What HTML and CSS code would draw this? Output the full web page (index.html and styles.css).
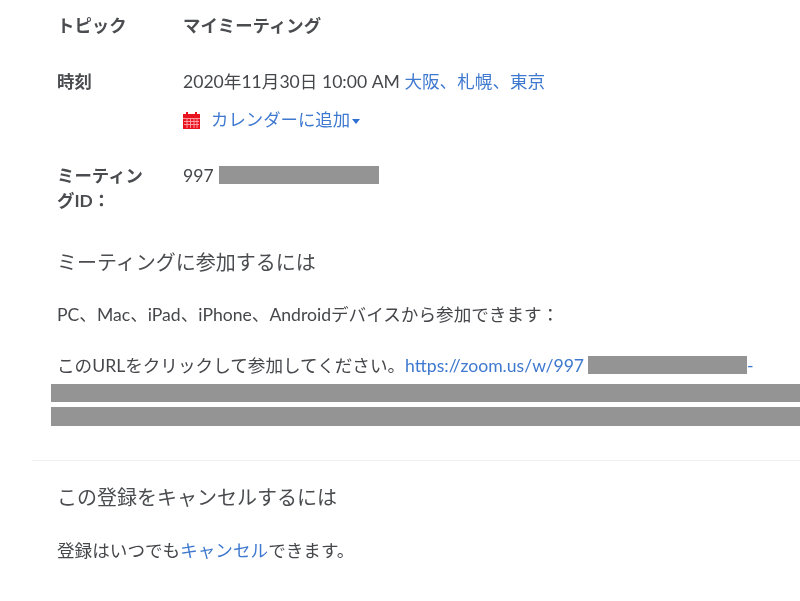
FILE: index.html
```html
<!DOCTYPE html>
<html lang="ja">
<head>
<meta charset="utf-8">
<title>ミーティング登録</title>
<link rel="stylesheet" href="styles.css">
</head>
<body>
<main class="page">
  <div class="info">
    <div class="row row-topic">
      <div class="label">トピック</div>
      <div class="value strong">マイミーティング</div>
    </div>
    <div class="row row-time">
      <div class="label">時刻</div>
      <div class="value">
        <div>2020年11月30日 10:00 AM <a class="link">大阪、札幌、東京</a></div>
        <div class="calendar">
          <svg class="cal-icon" viewBox="0 0 17 18" aria-hidden="true">
            <path fill="#e8131f" d="M0 3h3V1h2v2h7V1h2v2h3v15H0z"/>
            <path stroke="#ff9aa2" stroke-width="1" fill="none" d="M0 7.5h17M1 10.5h15M1 13.5h15M4 7v10M7.5 7v10M11 7v10M14 7v10"/>
          </svg>
          <a class="link">カレンダーに追加</a><span class="caret"></span>
        </div>
      </div>
    </div>
    <div class="row row-id">
      <div class="label">ミーティングID：</div>
      <div class="value">997 <span class="redact redact-id"></span></div>
    </div>
  </div>

  <h2 class="heading">ミーティングに参加するには</h2>
  <p class="text devices">PC、Mac、iPad、iPhone、Androidデバイスから参加できます：</p>
  <p class="text url">このURLをクリックして参加してください。<a class="link">https://zoom.us/w/997</a><span class="redact redact-url"></span><a class="link">-</a></p>
  <div class="redact-line first"></div>
  <div class="redact-line"></div>

  <hr class="divider">

  <h2 class="heading cancel-heading">この登録をキャンセルするには</h2>
  <p class="text cancel">登録はいつでも<a class="link">キャンセル</a>できます。</p>
</main>
</body>
</html>
```

FILE: styles.css
```css
html, body {
  margin: 0;
  padding: 0;
  background: #fff;
}
body {
  width: 800px;
  height: 601px;
  overflow: hidden;
  font-family: "Lato", "Noto Sans CJK JP", sans-serif;
  font-size: 17.6px;
  line-height: 27px;
  color: #45474b;
}
.page {
  filter: blur(0.5px);
  padding-top: 12px;
}
.info {
  padding-left: 57px;
}
.row {
  display: flex;
}
.label {
  width: 90px;
  margin-right: 36px;
  font-size: 17.4px;
  font-weight: 700;
  color: #4a4c50;
  flex: none;
}
.strong {
  font-size: 17.4px;
  font-weight: 700;
  color: #4a4c50;
}
.row-topic {
  margin-bottom: 29px;
}
.row-time {
  margin-bottom: 30px;
}
.row-id {
  line-height: 25px;
}
.calendar {
  display: flex;
  align-items: center;
  margin-top: 11px;
  font-size: 17.4px;
}
.cal-icon {
  width: 17px;
  height: 18px;
  margin-right: 11px;
}
.link {
  color: #3f79cf;
}
.caret {
  width: 0;
  height: 0;
  margin-left: 2px;
  margin-top: 3px;
  border-left: 4.5px solid transparent;
  border-right: 4.5px solid transparent;
  border-top: 5px solid #2f6fd0;
}
.redact {
  display: inline-block;
  height: 18px;
  background: #949494;
  vertical-align: -2px;
}
.redact-id {
  width: 160px;
  margin-left: 1px;
}
.redact-url {
  width: 159px;
  margin-left: 4px;
}
.heading {
  margin: 35px 0 0 57px;
  font-size: 20px;
  line-height: 28px;
  font-weight: 400;
  color: #4a4c50;
}
.text {
  margin: 0 0 0 57px;
  white-space: nowrap;
}
.devices {
  margin-top: 25px;
}
.url {
  margin-top: 24px;
  line-height: 27px;
}
.redact-line {
  height: 19px;
  margin: 5px 0 0 51px;
  background: #949494;
}
.redact-line.first {
  height: 18.5px;
  margin-top: 4.5px;
}
.divider {
  height: 1px;
  margin: 34px 0 0 32px;
  border: 0;
  background: #f0f0f0;
}
.cancel-heading {
  margin-top: 22px;
}
.cancel {
  margin-top: 26px;
}
```
